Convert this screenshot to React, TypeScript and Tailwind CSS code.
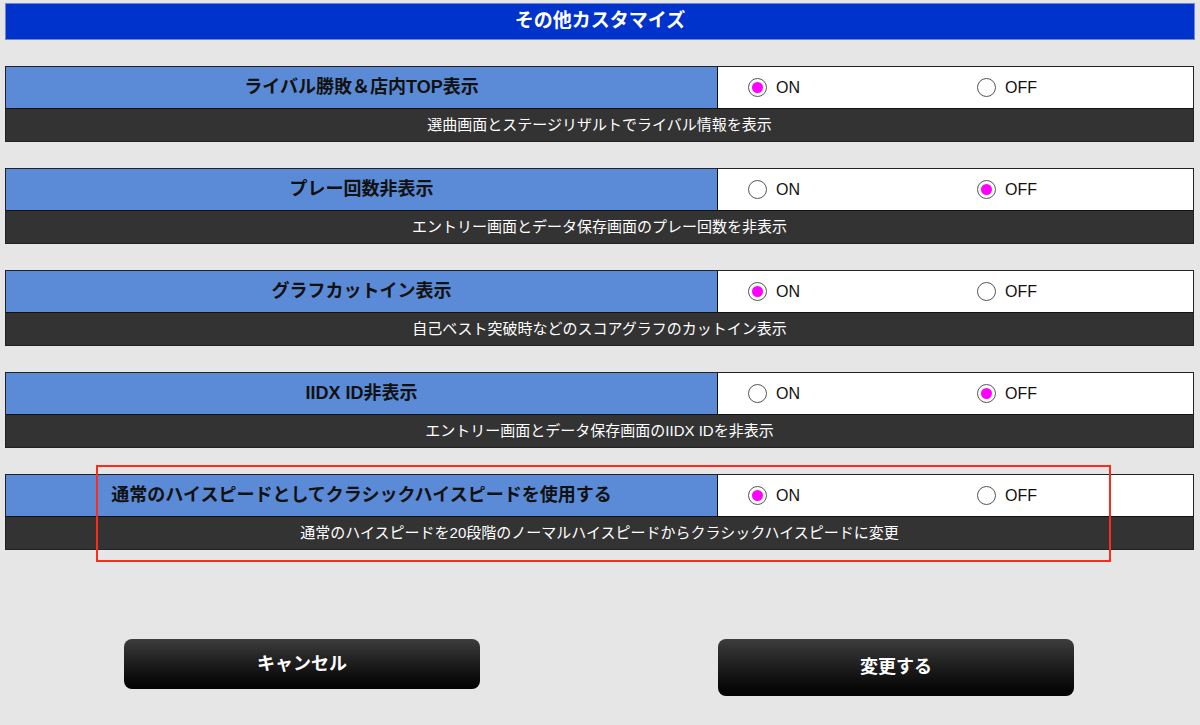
import { useState } from 'react';

interface Option {
  title: string;
  desc: string;
  on: boolean;
}

const initialOptions: Option[] = [
  { title: 'ライバル勝敗＆店内TOP表示', desc: '選曲画面とステージリザルトでライバル情報を表示', on: true },
  { title: 'プレー回数非表示', desc: 'エントリー画面とデータ保存画面のプレー回数を非表示', on: false },
  { title: 'グラフカットイン表示', desc: '自己ベスト突破時などのスコアグラフのカットイン表示', on: true },
  { title: 'IIDX ID非表示', desc: 'エントリー画面とデータ保存画面のIIDX IDを非表示', on: false },
  { title: '通常のハイスピードとしてクラシックハイスピードを使用する', desc: '通常のハイスピードを20段階のノーマルハイスピードからクラシックハイスピードに変更', on: true },
];

const Radio = ({ checked, label, onClick }: { checked: boolean; label: string; onClick: () => void }) => (
  <button onClick={onClick} className="w-[229px] shrink-0 flex items-center gap-[9px] text-left">
    <span className="w-[19px] h-[19px] rounded-full border border-[#555] bg-white flex items-center justify-center">
      {checked && <span className="w-[11px] h-[11px] rounded-full bg-[#ff00ff]"></span>}
    </span>
    <span className="text-[16px] text-[#111] leading-none">{label}</span>
  </button>
);

const App = () => {
  const [options, setOptions] = useState<Option[]>(initialOptions);

  const setValue = (index: number, on: boolean) => {
    setOptions(options.map((o, i) => (i === index ? { ...o, on } : o)));
  };

  return (
    <div
      className="w-[1200px] h-[725px] bg-[#e6e6e6] pt-[3px] px-[5px] relative overflow-hidden"
      style={{ fontFamily: '"Liberation Sans", "Noto Sans CJK JP", sans-serif' }}
    >
      <div className="h-[37px] bg-[#0033cc] border border-[#6f86dc] flex items-center justify-center">
        <h1 className="text-white font-bold text-[19px]">その他カスタマイズ</h1>
      </div>

      {options.map((opt, index) => (
        <div key={index} className="mt-[26px] w-[1189px] border border-[#222] bg-[#333]">
          <div className="h-[42px] flex border-b border-[#111]">
            <div className="w-[712px] shrink-0 bg-[#5b8bd6] flex items-center justify-center border-r border-[#111]">
              <span className="text-[18px] font-bold text-[#111]">{opt.title}</span>
            </div>
            <div className="flex-1 min-w-0 bg-white flex items-center pl-[30px] overflow-hidden">
              <Radio checked={opt.on} label="ON" onClick={() => setValue(index, true)} />
              <Radio checked={!opt.on} label="OFF" onClick={() => setValue(index, false)} />
            </div>
          </div>
          <div className="h-[32px] flex items-center justify-center">
            <span className="text-[15px] text-white">{opt.desc}</span>
          </div>
        </div>
      ))}

      <div className="absolute left-[96px] top-[465px] w-[1015px] h-[97px] border-2 border-[#ff2a1a] pointer-events-none"></div>

      <div className="mt-[89px] flex items-start pl-[119px] gap-[238px]">
        <button className="w-[356px] h-[50px] rounded-[8px] bg-gradient-to-b from-[#3d3d3d] to-[#030303] text-white font-bold text-[18px] flex items-center justify-center">
          キャンセル
        </button>
        <button className="w-[356px] h-[57px] rounded-[8px] bg-gradient-to-b from-[#3d3d3d] to-[#030303] text-white font-bold text-[18px] flex items-center justify-center">
          変更する
        </button>
      </div>
    </div>
  );
};

export default App;
